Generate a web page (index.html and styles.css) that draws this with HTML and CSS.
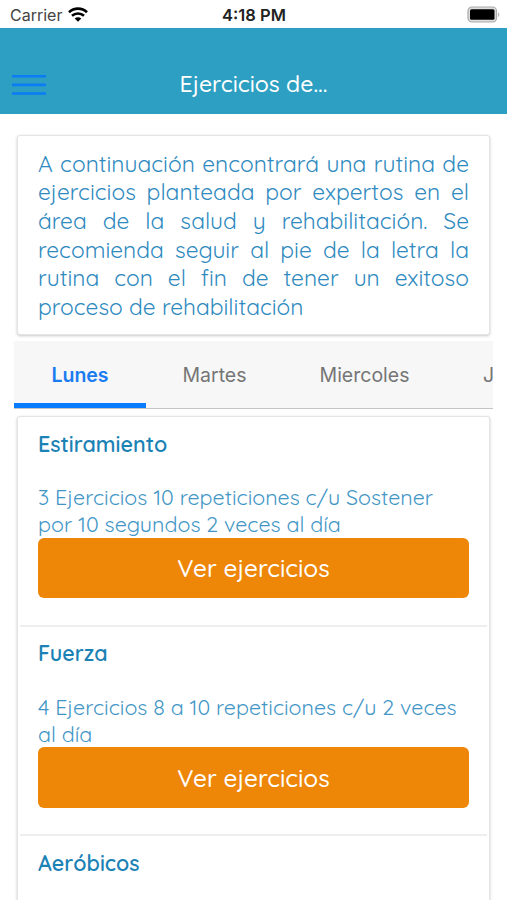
FILE: index.html
```
<!DOCTYPE html>
<html lang="es">
<head>
    <meta charset="UTF-8">
    <meta name="viewport" content="width=device-width, initial-scale=1.0">
    <title>Ejercicios</title>
    <link rel="stylesheet" href="styles.css">
</head>
<body>
    <div class="status-bar">
        <div class="carrier">
            <span>Carrier</span>
            <svg class="wifi" width="20" height="15" viewBox="0 0 20 15">
                <path d="M1 5.2C6 .4 14 .4 19 5.2" fill="none" stroke="#000" stroke-width="2.6"/>
                <path d="M4 8.8c3.4-3.1 8.6-3.1 12 0" fill="none" stroke="#000" stroke-width="2.6"/>
                <path d="M6.7 11.5c1.9-1.7 4.7-1.7 6.6 0L10 14.8z"/>
            </svg>
        </div>
        <span class="clock">4:18 PM</span>
        <svg class="battery" width="34" height="18" viewBox="0 0 34 18">
            <rect x="1" y="1" width="28.5" height="15" rx="4" fill="#ddd" stroke="#aaa" stroke-width="1.2"/>
            <rect x="3" y="3.2" width="24.5" height="10.6" rx="1.5"/>
            <path d="M31.2 6.5c1.4.5 1.4 3.9 0 4.4z" fill="#aaa"/>
        </svg>
    </div>

    <header class="header">
        <svg class="menu" width="34" height="22" viewBox="0 0 34 22">
            <path d="M0 2.3h34M0 10.9h34M0 19.5h34" stroke="#0a7cf5" stroke-width="2.6"/>
        </svg>
        <h1>Ejercicios de...</h1>
    </header>

    <main class="content">
        <div class="card intro">
            <p>A continuación encontrará una rutina de ejercicios planteada por expertos en el área de la salud y rehabilitación. Se recomienda seguir al pie de la letra la rutina con el fin de tener un exitoso proceso de rehabilitación</p>
        </div>

        <nav class="tabs">
            <div class="tab active">Lunes</div>
            <div class="tab">Martes</div>
            <div class="tab tab-wide">Miercoles</div>
            <div class="tab tab-last">J</div>
        </nav>

        <div class="card routine">
            <section class="item">
                <h2>Estiramiento</h2>
                <p>3 Ejercicios 10 repeticiones c/u Sostener<br>por 10 segundos 2 veces al día</p>
                <button type="button">Ver ejercicios</button>
            </section>
            <section class="item">
                <h2>Fuerza</h2>
                <p>4 Ejercicios 8 a 10 repeticiones c/u 2 veces<br>al día</p>
                <button type="button">Ver ejercicios</button>
            </section>
            <section class="item">
                <h2>Aeróbicos</h2>
            </section>
        </div>
    </main>
</body>
</html>
```
FILE: styles.css
```
* {
    box-sizing: border-box;
}

body {
    margin: 0;
    height: 900px;
    overflow: hidden;
    background: #fff;
    font-family: Quicksand, Lato, sans-serif;
}

h1, h2, p {
    margin: 0;
}

.status-bar {
    display: grid;
    grid-template-columns: 1fr auto 1fr;
    align-items: center;
    height: 28px;
    padding: 1px 6px 0 10px;
    font-family: Inter, sans-serif;
    font-size: 16px;
    color: #222;
}

.carrier {
    display: flex;
    align-items: center;
    gap: 6px;
    color: #444;
}

.clock {
    margin-right: 3px;
    font-size: 16.5px;
    font-weight: 600;
}

.battery {
    justify-self: end;
}

.header {
    display: grid;
    grid-template-columns: 34px 1fr 34px;
    align-items: center;
    height: 86px;
    padding: 27px 12px 0;
    background: #2d9fc2;
}

.header h1 {
    padding-bottom: 2px;
    color: #fff;
    font-size: 23px;
    font-weight: 500;
    text-align: center;
}

.content {
    height: 786px;
    padding: 20.5px 14px 0;
    overflow: hidden;
}

.card {
    margin: 0 3px;
    background: #fff;
    border: 1px solid #e4e4e4;
    border-radius: 3px;
    box-shadow: 0 1px 3px rgba(0, 0, 0, 0.22);
}

.intro {
    height: 200px;
    padding: 14px 20px;
}

.intro p {
    color: #2f8ac0;
    font-size: 22.75px;
    line-height: 28.7px;
    text-align: justify;
}

.tabs {
    display: flex;
    height: 68.5px;
    margin-top: 6px;
    overflow: hidden;
    background: #f7f7f7;
    border-bottom: 1px solid #c4c4c4;
    font-family: Inter, sans-serif;
    font-size: 19.5px;
    color: #757575;
}

.tab {
    flex: none;
    width: 132px;
    padding-top: 4px;
    line-height: 60px;
    text-align: center;
}

.tab:nth-child(2) {
    padding-left: 5px;
}

.tab.active {
    border-bottom: 5px solid #087bff;
    color: #1b7cf2;
    font-weight: 600;
}

.tab-wide {
    width: 173px;
}

.tab-last {
    padding-left: 32px;
    text-align: left;
}

.routine {
    height: 520px;
    margin-top: 7px;
}

.item {
    height: 209.5px;
    margin: 0 2px;
    padding: 12.9px 18px 0;
    border-bottom: 2px solid #eee;
}

.item h2 {
    color: #1b82b5;
    font-size: 21.5px;
    font-weight: 600;
    line-height: 28px;
}

.item p {
    margin-top: 26.5px;
    color: #4296c6;
    font-size: 21.45px;
    line-height: 26.8px;
    white-space: nowrap;
}

.item button {
    display: block;
    width: 100%;
    height: 60.5px;
    padding: 0;
    border: 0;
    border-radius: 6px;
    background: #ee8607;
    color: #fff;
    font: 500 24.4px Quicksand, Lato, sans-serif;
}
```
